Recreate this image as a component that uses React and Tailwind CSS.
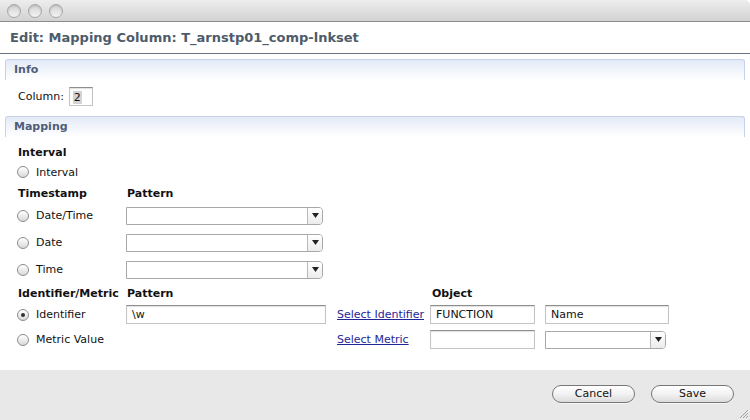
import React from 'react';

const font = { fontFamily: '"DejaVu Sans", "Liberation Sans", sans-serif' };

function Radio({ checked }) {
  return (
    <span className="w-[12px] h-[12px] rounded-full border border-[#8c8c8c] bg-gradient-to-b from-white to-[#d9d9d9] flex items-center justify-center shrink-0 shadow-[inset_0_1px_1px_rgba(255,255,255,0.9)]">
      {checked && <span className="w-[4px] h-[4px] rounded-full bg-[#333]" />}
    </span>
  );
}

function TextBox({ className, children }) {
  return (
    <div className={'h-[19px] bg-white border border-[#c4c4c4] border-t-[#8e8e8e] shadow-[inset_0_1px_1px_rgba(0,0,0,0.12)] flex items-center px-[5px] pt-[2px] text-[11px] text-[#111] ' + className}>
      {children}
    </div>
  );
}

function Select({ className }) {
  return (
    <div className={'h-[18px] flex border border-[#a8a8a8] rounded-r-[4px] bg-white overflow-hidden ' + className}>
      <div className="flex-1" />
      <div className="w-[15px] border-l border-[#b8b8b8] bg-gradient-to-b from-white to-[#ececec] flex items-center justify-center">
        <svg width="7" height="5" viewBox="0 0 7 5"><path d="M0 0H7L3.5 5Z" fill="#222" /></svg>
      </div>
    </div>
  );
}

function SectionHeader({ title }) {
  return (
    <div className="mx-[5px] h-[21px] border-t border-x border-[#c5d2e8] rounded-t-[3px] bg-gradient-to-b from-[#e3eaf7] to-white flex items-center px-[8px] pt-[1px]">
      <span className="text-[11px] font-bold text-[#4f5d79]">{title}</span>
    </div>
  );
}

function Heading({ children, className }) {
  return <div className={'h-[14px] flex items-center pt-[2px] text-[11px] font-bold text-[#111] ' + className}>{children}</div>;
}

function RadioLabel({ checked, label }) {
  return (
    <div className="w-[109px] flex items-center gap-[7px] text-[11px] text-[#111]">
      <Radio checked={checked} />
      <span className="pt-[2px]">{label}</span>
    </div>
  );
}

function TrafficLight() {
  return <span className="w-[14px] h-[14px] rounded-full border border-[#a6a6a6] bg-gradient-to-b from-[#d2d2d2] to-[#f4f4f4] shadow-[inset_0_1px_2px_rgba(0,0,0,0.15)]" />;
}

export default function App() {
  return (
    <div style={font} className="w-[750px] h-[420px] bg-white flex flex-col overflow-hidden text-[#111]">
      {/* window chrome */}
      <div className="h-[22px] shrink-0 bg-gradient-to-b from-[#ededed] to-[#d2d2d2] border-b border-[#8d8d8d] rounded-tr-[5px] flex items-center gap-[7px] pl-[7px]">
        <TrafficLight />
        <TrafficLight />
        <TrafficLight />
      </div>

      <div className="h-[32px] shrink-0 border-b border-[#6a7480] flex items-center pl-[10px] pt-[1px]">
        <span className="text-[13px] font-bold text-[#4e5b6a]">Edit: Mapping Column: T_arnstp01_comp-lnkset</span>
      </div>

      <div className="pt-[5px] shrink-0">
        <SectionHeader title="Info" />
        <div className="pl-[18px] pt-[7px] pb-[10px] flex items-center gap-[5px] text-[11px]">
          <span className="pt-[2px]">Column:</span>
          <div className="w-[24px] h-[19px] bg-white border border-[#c4c4c4] border-t-[#8e8e8e] shadow-[inset_0_1px_1px_rgba(0,0,0,0.12)] flex items-center pl-[3px] pt-[1px]">
            <span className="bg-[#d4d4d4] px-[1px] leading-[13px]">2</span>
          </div>
        </div>

        <SectionHeader title="Mapping" />
        <div className="pl-[17px]">
          <Heading className="mt-[8px] pl-[1px]">Interval</Heading>
          <div className="mt-[3px] h-[20px] flex items-center">
            <RadioLabel label="Interval" />
          </div>

          <div className="mt-[4px] flex">
            <Heading className="w-[110px] pl-[1px]">Timestamp</Heading>
            <Heading>Pattern</Heading>
          </div>
          <div className="mt-[2px]">
            {['Date/Time', 'Date', 'Time'].map((l) => (
              <div key={l} className="h-[27px] flex items-center">
                <RadioLabel label={l} />
                <Select className="w-[197px]" />
              </div>
            ))}
          </div>

          <div className="mt-[3px] flex">
            <Heading className="w-[110px] pl-[1px]">Identifier/Metric</Heading>
            <Heading className="w-[305px]">Pattern</Heading>
            <Heading>Object</Heading>
          </div>
          <div className="mt-[2px] h-[25px] flex items-center">
            <RadioLabel checked label="Identifier" />
            <TextBox className="w-[200px]">\w</TextBox>
            <a href="#" className="ml-[11px] w-[93px] pt-[2px] text-[11px] text-[#1f2696] underline">Select Identifier</a>
            <TextBox className="w-[105px]">FUNCTION</TextBox>
            <TextBox className="ml-[10px] w-[124px]">Name</TextBox>
          </div>
          <div className="h-[25px] flex items-center">
            <RadioLabel label="Metric Value" />
            <div className="w-[200px]" />
            <a href="#" className="ml-[11px] w-[93px] pt-[2px] text-[11px] text-[#1f2696] underline">Select Metric</a>
            <TextBox className="w-[105px]" />
            <Select className="ml-[10px] w-[121px]" />
          </div>
        </div>
      </div>

      {/* footer */}
      <div className="mt-[18px] flex-1 bg-[#e8e8e8] relative flex justify-end items-start pt-[15px] pr-[16px] gap-[16px]">
        {['Cancel', 'Save'].map((b) => (
          <button key={b} className="w-[83px] h-[18px] rounded-full border border-[#777] bg-gradient-to-b from-white via-[#f2f2f2] to-[#dcdcdc] text-[11px] text-[#111] flex items-center justify-center pt-[1px] shadow-[0_1px_0_rgba(255,255,255,0.6)]">
            {b}
          </button>
        ))}
        <svg className="absolute right-[1px] bottom-[1px]" width="12" height="12" viewBox="0 0 12 12">
          <path d="M11 3L3 11M11 6L6 11M11 9L9 11" stroke="#a0a0a0" strokeWidth="1" />
        </svg>
      </div>
    </div>
  );
}
